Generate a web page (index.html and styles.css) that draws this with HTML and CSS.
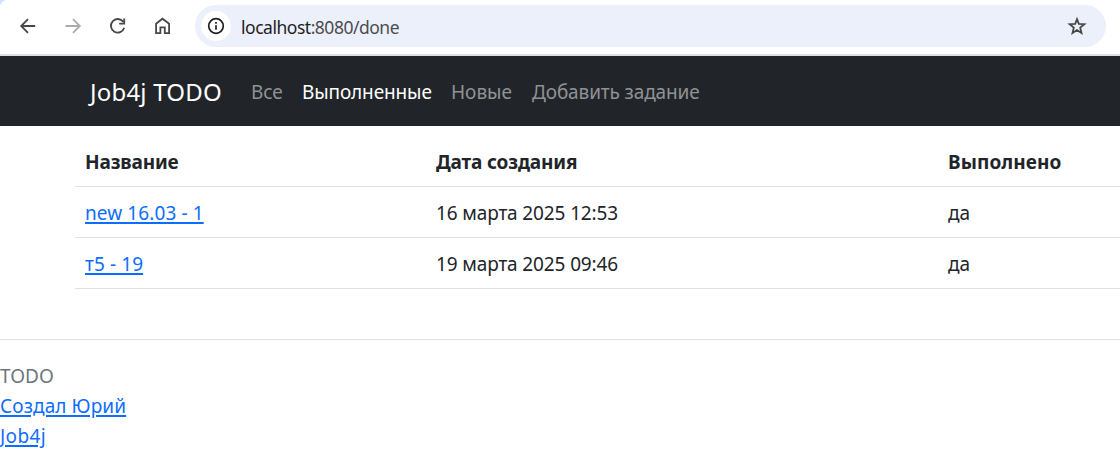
FILE: index.html
```html
<!DOCTYPE html>
<html lang="ru">
<head>
<meta charset="utf-8">
<title>Job4j TODO</title>
<link rel="stylesheet" href="styles.css">
</head>
<body>
<header class="browser-bar">
  <div class="browser-buttons">
    <svg class="icon" viewBox="0 0 20 20"><path d="M17.2 10H3.8M10 3.2L3.2 10l6.8 6.8"/></svg>
    <svg class="icon icon-disabled" viewBox="0 0 20 20"><path d="M2.5 10H16M10 3.2l6.8 6.8-6.8 6.8"/></svg>
    <svg class="icon" viewBox="0 0 20 20"><path d="M15.2 5.8A6.8 6.8 0 1 0 16.2 11.8M16.2 2.6V7.6H11.2"/></svg>
    <svg class="icon" viewBox="0 0 20 20"><path d="M3.1 17.2V7.8L9.5 2.7l6.6 5.1v9.4h-4.3v-5.8H7.4v5.8z"/></svg>
  </div>
  <div class="address">
    <span class="site-info"><svg class="info" viewBox="0 0 18 18"><circle cx="9" cy="9" r="7.3"/><path d="M9 8.2v4.6M9 5v1.8"/></svg></span>
    <span class="url"><span class="host">localhost</span>:8080/done</span>
    <svg class="star" viewBox="0 0 20 20"><path d="M10 3.2l1.8 4.6 5.6.4-4.2 3.4 1.3 5.4L10 14.1 5.5 17l1.3-5.4-4.2-3.4 5.6-.4z"/></svg>
  </div>
</header>
<nav class="navbar">
  <a class="brand">Job4j TODO</a>
  <a class="nav-link nav-all">Все</a>
  <a class="nav-link nav-done active">Выполненные</a>
  <a class="nav-link nav-new">Новые</a>
  <a class="nav-link nav-add">Добавить задание</a>
</nav>
<main class="container">
  <table class="tasks">
    <colgroup><col class="col-name"><col class="col-date"><col></colgroup>
    <thead><tr><th>Название</th><th>Дата создания</th><th class="head-done">Выполнено</th></tr></thead>
    <tbody>
      <tr><td><a class="link">new 16.03 - 1</a></td><td class="date">16 марта 2025 12:53</td><td>да</td></tr>
      <tr><td><a class="link">т5 - 19</a></td><td class="date">19 марта 2025 09:46</td><td>да</td></tr>
    </tbody>
  </table>
</main>
<footer class="footer">
  <span class="muted">TODO</span>
  <a class="link">Создал Юрий</a>
  <a class="link footer-brand">Job4j</a>
</footer>
</body>
</html>
```
FILE: styles.css
```css
* { box-sizing: border-box; }
body {
  margin: 0;
  height: 457px;
  overflow: hidden;
  background: #fff;
  color: #212529;
  font: 19px/30px "Noto Sans", "Open Sans", sans-serif;
}
.browser-bar {
  display: flex;
  align-items: center;
  height: 56px;
  padding: 0 14px 4px 18px;
  border-bottom: 2px solid #dfe0e1;
  background: radial-gradient(circle at 8px 8px, #fff 8px, #d3e3fd 8.5px) 0 0 / 8px 8px no-repeat #fff;
}
.browser-buttons { display: flex; gap: 25px; width: 177px; padding-top: 1px; }
.icon { width: 20px; height: 20px; fill: none; stroke: #474747; stroke-width: 1.8; }
.icon-disabled { stroke: #ababab; }
.address {
  display: flex;
  align-items: center;
  flex: 1;
  height: 42px;
  margin-top: 2px;
  padding: 0 19px 0 6px;
  border-radius: 21px;
  background: #ecf0fa;
}
.site-info {
  display: flex;
  align-items: center;
  justify-content: center;
  width: 30px;
  height: 30px;
  border-radius: 50%;
  background: #fff;
}
.info { width: 18px; height: 18px; fill: none; stroke: #1f1f1f; stroke-width: 1.7; }
.url { flex: 1; margin-left: 10px; padding-top: 1px; font-size: 17.5px; letter-spacing: -0.48px; color: #4b4d50; }
.host { color: #1f1f1f; }
.star { width: 20px; height: 20px; fill: none; stroke: #474747; stroke-width: 1.8; }
.navbar {
  display: flex;
  align-items: center;
  height: 70px;
  padding: 2px 0 0 90px;
  background: #212529;
  color: #909294;
}
.brand { width: 161px; font-size: 24px; letter-spacing: 0.2px; color: #fff; }
.nav-link { letter-spacing: -0.12px; white-space: nowrap; }
.nav-all { width: 51px; }
.nav-done { width: 149px; }
.nav-new { width: 81px; letter-spacing: 0; }
.active { color: #fff; }
.container { padding: 10px 0 0 75px; }
.tasks { width: 100%; table-layout: fixed; border-collapse: separate; border-spacing: 0; }
.col-name { width: 351px; }
.col-date { width: 512px; }
.tasks th, .tasks td {
  height: 51px;
  padding: 11px 10px 9px;
  border-bottom: 1px solid #dee2e6;
  text-align: left;
  white-space: nowrap;
}
.tasks th { letter-spacing: -0.15px; }
.tasks .head-done { letter-spacing: 0.1px; }
.date { letter-spacing: -0.13px; }
.link {
  color: #0d6efd;
  letter-spacing: 0.1px;
  text-decoration: underline;
  text-underline-offset: 2px;
  text-decoration-thickness: 2px;
}
.footer-brand { letter-spacing: 0.4px; }
.footer {
  display: flex;
  flex-direction: column;
  align-items: flex-start;
  margin-top: 50px;
  padding-top: 21px;
  border-top: 1px solid #dee2e6;
}
.muted { color: #6c757d; }
```
